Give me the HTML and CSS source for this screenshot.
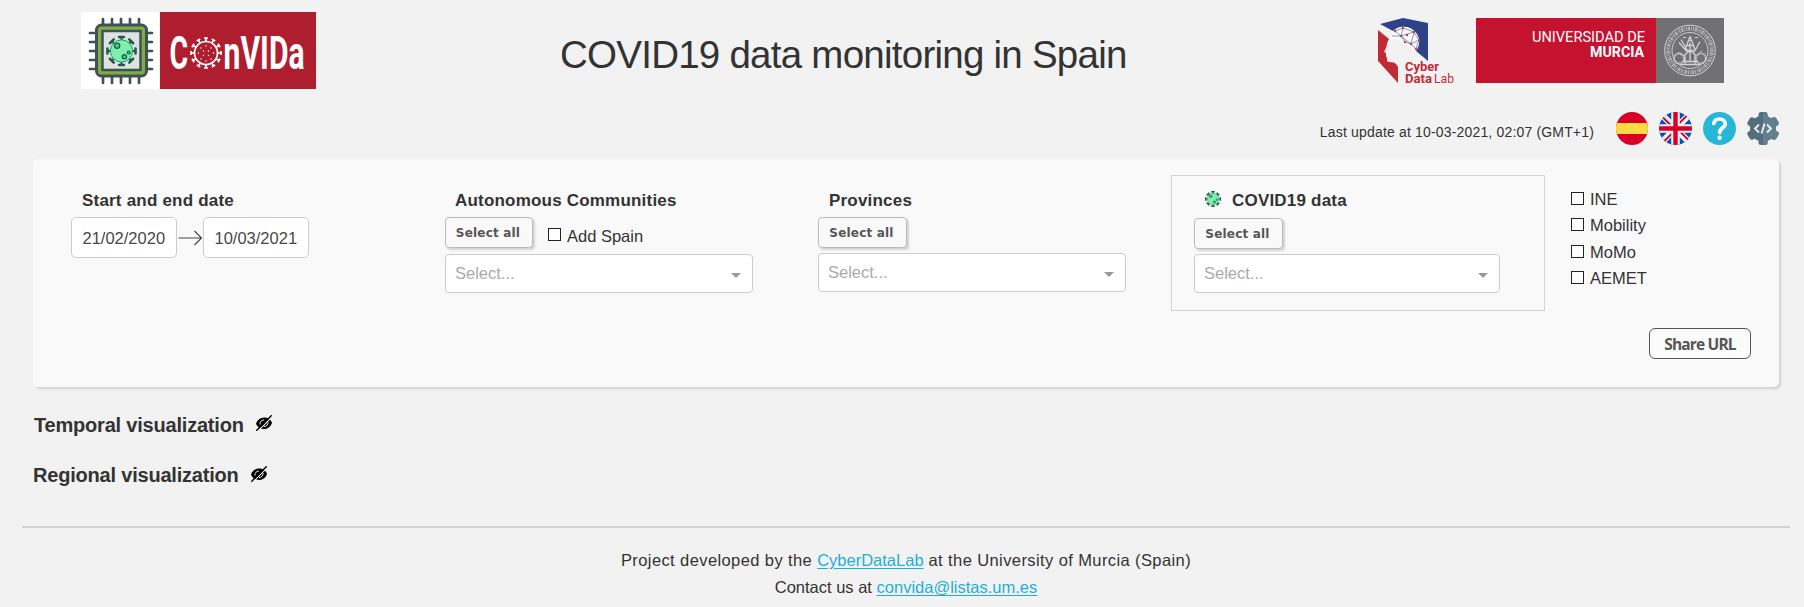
FILE: index.html
```html
<!DOCTYPE html>
<html lang="en">
<head>
<meta charset="utf-8">
<title>COVID19 data monitoring in Spain</title>
<link rel="stylesheet" href="styles.css">
</head>
<body>
<svg class="defs" width="0" height="0" aria-hidden="true">
  <symbol id="virus" viewBox="0 0 32 32">
    <g stroke="#1f5a4a" stroke-width="2.2" stroke-linecap="round">
      <path d="M16 2v28M2 16h28M6 6l20 20M26 6L6 26"/>
      <path d="M13.5 1.5h5M13.5 30.500h5M1.500 13.500v5M30.500 13.500v5M4 8l4-4M24 4l4 4M4 24l4 4M24 28l4-4" stroke-width="2.600"/>
    </g>
    <circle cx="16" cy="16" r="11.500" fill="#7cf0ab" stroke="#2a9168" stroke-width="1"/>
    <circle cx="11.500" cy="10.500" r="2.700" fill="#4fc98c" stroke="#1f5a4a" stroke-width="1.300"/>
    <circle cx="19" cy="22" r="2.200" fill="#4fc98c" stroke="#1f5a4a" stroke-width="1.300"/>
    <circle cx="23.500" cy="17.500" r="1.500" fill="#4fc98c" stroke="#1f5a4a" stroke-width="1.200"/>
  </symbol>
  <symbol id="eye-off" viewBox="0 0 16 16">
    <path d="M0 8.500C1.500 4.500 4.500 2.500 8 2.500s6.500 1.500 8 5.500c-1.500 4-4.500 6-8 6s-6.500-1.500-8-5.500z"/>
    <path d="M4 9.500C3.700 6.800 5.500 5 8 5M12 7c.3 2.600-1.500 4.500-4 4.600" fill="none" stroke="#f2f2f2" stroke-width="1"/>
    <path d="M1.500 16.500L16.500 1.500" stroke="#f2f2f2" stroke-width="1.200"/>
    <path d="M.3 15.700L15.700.3" stroke="#000" stroke-width="1.400"/>
  </symbol>
</svg>

<header class="header">
  <svg class="convida" viewBox="0 0 235 77" role="img" aria-label="ConVIDa">
    <path fill="#fff" d="M0 0h78v77H0z"/>
    <path fill="#ae1e2e" d="M79 0h156v77H79z"/>
    <path d="M22 7v64M31 7v64M40 7v64M49 7v64M58 7v64M9 21h62M9 30h62M9 39h62M9 48h62M9 57h62" stroke="#40505a" stroke-width="2.700" stroke-linecap="round"/>
    <rect x="15.500" y="13" width="50" height="51" rx="5" fill="#7fb03f" stroke="#40505a" stroke-width="3"/>
    <rect x="21.500" y="19" width="38" height="39" fill="#dfe2e2" stroke="#40505a" stroke-width="2.500"/>
    <use href="#virus" x="25" y="23" width="31" height="32"/>
    <g class="brand-text">
      <text transform="translate(88.500 56.500) scale(.62 1)">C</text>
      <text transform="translate(142.500 56.500) scale(.655 1)">nVIDa</text>
    </g>
    <g stroke="#fff" fill="none" transform="translate(125 41)">
      <circle r="11.500" stroke-width="1.700"/>
      <g stroke-width="1.700">
        <path id="spike" d="M0-12v-3M-2-15h4"/>
        <use href="#spike" transform="rotate(30)"/><use href="#spike" transform="rotate(60)"/>
        <use href="#spike" transform="rotate(90)"/><use href="#spike" transform="rotate(120)"/>
        <use href="#spike" transform="rotate(150)"/><use href="#spike" transform="rotate(180)"/>
        <use href="#spike" transform="rotate(210)"/><use href="#spike" transform="rotate(240)"/>
        <use href="#spike" transform="rotate(270)"/><use href="#spike" transform="rotate(300)"/>
        <use href="#spike" transform="rotate(330)"/>
      </g>
      <path d="M0-7v0M-5-5v0M5-5v0M-7.500 0v0M-2.500-2v0M2.500-2v0M7.500 0v0M-2.500 2.500v0M2.500 2.500v0M-5 6v0M5 6v0M0 8v0" stroke-width="1.400" stroke-linecap="round"/>
    </g>
  </svg>

  <h1 class="title">COVID19 data monitoring in Spain</h1>

  <svg class="cyber" viewBox="0 0 76 66" role="img" aria-label="Cyber Data Lab">
    <path fill="#2e4287" d="M2 6L25 0l25 5v38L38 33c5-7 4-16-3-21-6-5-15-4-20 1z"/>
    <path fill="#c22a35" d="M0 12l11 9c-2 3-2 6-3 9l-2 4 2 1v3l1 2v3c2 2 5 0 9 3l2 3v16L0 43z"/>
    <path fill="#fff" d="M11 21l3-7c6-6 14-7 21-2 7 5 8 14 3 21l-4-2-14-10z" opacity=".9"/>
    <path d="M17 13l8-3 11 4 5 8-3 9M17 13l6 5 13-4M25 10l-2 8 10 8 3-12M14 18l9 0 4 6 6 2 8-4M33 26l5 5" stroke="#53618f" stroke-width=".7" fill="none"/>
    <path d="M17 13v0M25 10v0M36 14v0M23 18v0M29 17v0M41 22v0M27 24v0M33 26v0M38 31v0" stroke="#d33b45" stroke-width="2.500" stroke-linecap="round"/>
    <g class="cyber-text">
      <text x="27" y="53" textLength="34" lengthAdjust="spacingAndGlyphs">Cyber</text>
      <text x="27" y="64.500" textLength="27" lengthAdjust="spacingAndGlyphs">Data</text>
      <text class="light" x="56" y="64.500" textLength="20" lengthAdjust="spacingAndGlyphs">Lab</text>
    </g>
  </svg>

  <svg class="murcia" viewBox="0 0 248 65" role="img" aria-label="Universidad de Murcia">
    <path fill="#c4122f" d="M0 0h180v65H0z"/>
    <path fill="#717173" d="M180 0h68v65h-68z"/>
    <g class="murcia-text">
      <text class="light" x="56" y="23.500" textLength="113" lengthAdjust="spacingAndGlyphs">UNIVERSIDAD DE</text>
      <text x="114" y="39" textLength="54" lengthAdjust="spacingAndGlyphs">MURCIA</text>
    </g>
    <g transform="translate(214 32.500)" fill="none" stroke="#d4d4d5">
      <circle r="25.300" stroke-width="1"/>
      <circle r="21.800" stroke-width="4" stroke-dasharray="1.200 1 2 .9 .8 1.100" opacity=".7"/>
      <circle r="18" stroke-width=".9"/>
      <circle cx="-11" cy="8" r="5" stroke-width="2" stroke-dasharray="1 .6"/>
      <circle cx="11" cy="8" r="5" stroke-width="2" stroke-dasharray="1 .6"/>
      <path d="M-11-8l8 9M-9-11l7 12M0-14l-5 13M0-14l5 13M10-9L4 2M0-8v18M-3-5h6M-4 0h8M-6 5L0 0l6 5M-5 5v8M5 5v8M-10 14h20M-7 11h14" stroke-width="1.300"/>
      <path d="M-7-13h3M5-13h3M-2-10h4M-12 2l4 3M12 0l-4 4" stroke-width="1"/>
    </g>
  </svg>
</header>

<div class="toolbar">
  <span class="updated">Last update at 10-03-2021, 02:07 (GMT+1)</span>
  <svg class="flag-es" viewBox="0 0 32 33">
    <clipPath id="round-es"><ellipse cx="16" cy="16.500" rx="16" ry="16.500"/></clipPath>
    <g clip-path="url(#round-es)"><path fill="#d80027" d="M0 0h32v33H0z"/><path fill="#ffda44" d="M0 11h32v11H0z"/></g>
  </svg>
  <svg class="flag-gb" viewBox="0 0 33 33">
    <clipPath id="round-gb"><circle cx="16.500" cy="16.500" r="16.500"/></clipPath>
    <g clip-path="url(#round-gb)">
      <path fill="#0052b4" d="M0 0h33v33H0z"/>
      <path d="M0 0l33 33M33 0L0 33" stroke="#f0f0f0" stroke-width="6.500"/>
      <path d="M2.500 4l9 9M29 2.500L20 11.500M30.500 29l-9-9M4 30.500l9-9" stroke="#d80027" stroke-width="1.800"/>
      <path d="M16.500 0v33M0 16.500h33" stroke="#f0f0f0" stroke-width="8.600"/>
      <path d="M16.500 0v33M0 16.500h33" stroke="#d80027" stroke-width="4.400"/>
    </g>
  </svg>
  <svg class="help" viewBox="0 0 33 33">
    <circle cx="16.500" cy="16.500" r="16.500" fill="#26b7d8"/>
    <path d="M10.800 11.500c.5-3 2.700-4.500 5.700-4.500 3.300 0 5.800 2 5.800 4.900 0 3.700-5.600 4.200-5.600 8.600" fill="none" stroke="#fff" stroke-width="3.700" stroke-linecap="round"/>
    <circle cx="16.600" cy="25.700" r="2.200" fill="#fff"/>
  </svg>
  <svg class="gear" viewBox="0 0 32 33">
    <clipPath id="gear-right"><path d="M16 0h16v33H16z"/></clipPath>
    <g id="gear-shape">
      <circle cx="16" cy="16.500" r="13"/>
      <rect id="tooth" x="11.500" y="0" width="9" height="33" rx="2.500"/>
      <use href="#tooth" transform="rotate(60 16 16.500)"/>
      <use href="#tooth" transform="rotate(120 16 16.500)"/>
    </g>
    <use href="#gear-shape" clip-path="url(#gear-right)" class="gear-light"/>
    <path d="M12 12.500l-4 4 4 4M20 12.500l4 4-4 4M17.500 11.500l-3 10" fill="none" stroke="#e6eef2" stroke-width="1.900"/>
  </svg>
</div>

<main class="panel">
  <section class="col dates">
    <h2 class="label">Start and end date</h2>
    <div class="range">
      <div class="date">21/02/2020</div>
      <svg class="arrow" viewBox="0 0 26 16"><path d="M1.500 8h23M17.500 1l7 7-7 7" fill="none" stroke="#484848" stroke-width="1.200"/></svg>
      <div class="date">10/03/2021</div>
    </div>
  </section>

  <section class="col communities">
    <h2 class="label">Autonomous Communities</h2>
    <div class="actions">
      <button class="btn">Select all</button>
      <label class="check"><span class="box"></span>Add Spain</label>
    </div>
    <div class="select"><span>Select...</span><i class="caret"></i></div>
  </section>

  <section class="col provinces">
    <h2 class="label">Provinces</h2>
    <div class="actions"><button class="btn wide">Select all</button></div>
    <div class="select"><span>Select...</span><i class="caret"></i></div>
  </section>

  <section class="covid">
    <h2 class="label"><svg class="virus"><use href="#virus"/></svg>COVID19 data</h2>
    <div class="actions"><button class="btn wide">Select all</button></div>
    <div class="select"><span>Select...</span><i class="caret"></i></div>
  </section>

  <section class="sources">
    <label class="check"><span class="box"></span>INE</label>
    <label class="check"><span class="box"></span>Mobility</label>
    <label class="check"><span class="box"></span>MoMo</label>
    <label class="check"><span class="box"></span>AEMET</label>
  </section>

  <button class="share">Share URL</button>
</main>

<h3 class="section-title temporal">Temporal visualization<svg class="eye"><use href="#eye-off"/></svg></h3>
<h3 class="section-title regional">Regional visualization<svg class="eye"><use href="#eye-off"/></svg></h3>

<footer class="footer">
  <p class="credits">Project developed by the <a href="#">CyberDataLab</a> at the University of Murcia (Spain)</p>
  <p>Contact us at <a href="#">convida@listas.um.es</a></p>
</footer>
</body>
</html>
```
FILE: styles.css
```css
* { box-sizing: border-box; }
body {
  margin: 0;
  height: 607px;
  overflow: hidden;
  background: #f2f2f2;
  color: #333;
  font: 16.5px/20px "Liberation Sans", Arial, sans-serif;
}
h1, h2, h3, p { margin: 0; }
svg { display: block; flex: none; }
.defs { position: absolute; }

.header { display: flex; align-items: flex-start; height: 106px; padding: 12px 0 0 81px; }
.convida { width: 235px; height: 77px; }
.brand-text { font: 700 46px Roboto, sans-serif; fill: #fff; }
.title {
  width: 580px;
  margin: 18px 0 0 242px;
  padding-left: 2px;
  font-size: 38.5px;
  font-weight: 400;
  line-height: 50px;
  letter-spacing: -.75px;
  white-space: nowrap;
}
.cyber { width: 76px; height: 66px; margin: 6px 0 0 240px; }
.cyber-text { font: 700 12px Roboto, sans-serif; fill: #c22a35; }
.light { font-weight: 400; }
.murcia { width: 248px; height: 65px; margin: 6px 0 0 22px; }
.murcia-text { font: 700 15px Roboto, sans-serif; fill: #fff; }
.murcia-text .light { font-weight: 400; }

.toolbar { display: flex; justify-content: flex-end; height: 53px; padding: 6px 25px 0 0; }
.updated { margin: 10px 22px 0 0; font-size: 14px; letter-spacing: .17px; }
.flag-es, .gear { width: 32px; height: 33px; }
.flag-gb, .help { width: 33px; height: 33px; margin-left: 11px; }
.gear { margin-left: 11px; fill: #546f7c; }
.gear-light { fill: #617f8e; }

.panel {
  display: grid;
  grid-template-columns: 412px 373px 353px 374px 1fr;
  grid-template-rows: 169px 1fr;
  width: 1746px;
  height: 228px;
  margin-left: 33px;
  border-radius: 5px;
  background: #f9f9f9;
  box-shadow: 2px 2px 2px lightgrey;
}
.col { padding-top: 31px; }
.dates { padding-left: 38px; }
.label { height: 27px; padding: 1px 0 0 10px; font-size: 17px; line-height: 20px; letter-spacing: .2px; }
.dates .label, .provinces .label { padding-left: 11px; }
.range { display: flex; align-items: center; }
.date {
  width: 106px;
  height: 41px;
  padding-left: 10.5px;
  border: 1px solid #cacccd;
  border-radius: 5px;
  background: #fff;
  color: #484848;
  line-height: 40px;
}
.arrow { width: 26px; height: 16px; }

.actions { display: flex; height: 36px; }
.communities .actions { height: 37px; }
.btn {
  width: 88px;
  height: 31px;
  padding: 0 2px 0 0;
  border: 1px solid #bbb;
  border-radius: 4px;
  background: #f9f9f9;
  box-shadow: 2px 2px 2px lightgrey;
  color: #555;
  font: 700 12px "DejaVu Sans", sans-serif;
  letter-spacing: .2px;
}
.wide { width: 89px; }
.check { display: flex; align-items: flex-start; }
.check .box { flex: none; width: 13px; height: 13px; margin-right: 6px; border: 1px solid #222; background: #fff; }
.communities .check { margin: 9px 0 0 15px; }
.communities .box { margin-top: 2px; }
.select {
  display: flex;
  justify-content: space-between;
  width: 308px;
  height: 39px;
  padding: 0 11px 0 9px;
  border: 1px solid #ccc;
  border-radius: 4px;
  background: #fff;
  color: #aaa;
  line-height: 37px;
}
.caret { align-self: center; margin-top: 4px; border: 5px solid transparent; border-top-color: #999; border-bottom: 0; }

.covid { height: 136px; margin-top: 16px; padding: 14px 0 0 22px; border: 1px solid #d3d3d3; }
.covid .label { display: flex; height: 28px; padding-left: 11px; }
.virus { width: 16px; height: 16px; margin: 0 11px 0 0; }
.covid .select { width: 306px; }

.sources { padding: 30px 0 0 26px; }
.sources .check { height: 26.4px; }
.sources .box { margin-top: 3px; }

.share {
  grid-column: 5;
  justify-self: end;
  width: 102px;
  height: 31px;
  margin-right: 28px;
  padding: 0;
  border: 1px solid #555;
  border-radius: 6px;
  background: #fbfbfb;
  color: #555;
  font: 700 15.5px "Open Sans", sans-serif;
  letter-spacing: -.85px;
}

.section-title { display: flex; height: 50px; padding-left: 34px; font-size: 20px; line-height: 24px; letter-spacing: -.2px; }
.temporal { margin-top: 26px; }
.regional { height: 63px; padding-left: 33px; }
.eye { width: 16px; height: 16px; margin: 2px 0 0 12px; }
.regional .eye { margin-top: 3px; }

.footer { width: 1768px; margin-left: 22px; padding-top: 22px; border-top: 2px solid #d2d2d2; text-align: center; }
.footer p { height: 27px; }
.credits { letter-spacing: .4px; }
.footer a { color: #1eaedb; letter-spacing: 0; text-underline-offset: 2px; }
```
